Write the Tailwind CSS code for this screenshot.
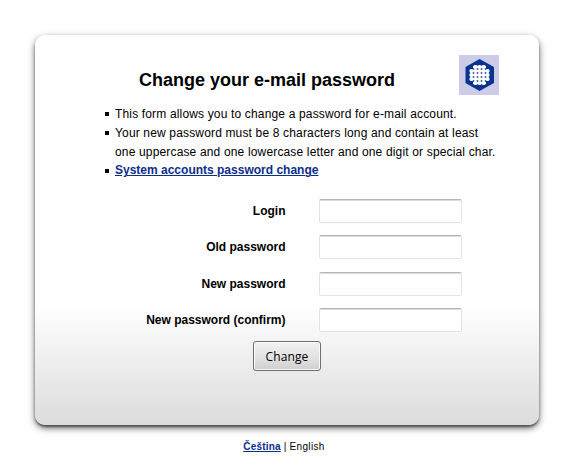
<!DOCTYPE html>
<html lang="en">
<head>
<meta charset="utf-8">
<title>Change your e-mail password</title>
<script src="https://cdn.jsdelivr.net/npm/@tailwindcss/browser@4"></script>
</head>
<body class="h-[476px] overflow-hidden bg-white pt-[35px] font-['Liberation_Sans',Arial,sans-serif] text-xs text-black">
<main class="ml-[35px] h-[390px] w-[504px] rounded-[10px] bg-linear-to-b from-[#fefefe] from-70% to-[#dcdcdc] shadow-[0_3px_7px_#00000099,0_2px_2px_#00000066]">
  <header class="flex h-[70px] pt-5 pl-[104px]">
    <h1 class="w-[320px] pt-[12px] text-[18px] leading-[27px] font-bold whitespace-nowrap">Change your e-mail password</h1>
    <svg class="size-10" viewBox="0 0 40 40" aria-hidden="true">
      <rect width="40" height="40" fill="#cccce9"/>
      <path d="M20.500 4 35 12V28L20.500 36 6.500 28V12Z" fill="#08338f"/>
      <path d="M16.500 10V30M20.500 10V30M24.500 10V30M12.500 14V26M28.500 14V26M14 12H27M10.500 16H30.500M10.500 20H30.500M10.500 24H30.500M14 28H27" fill="none" stroke="#fff" stroke-width="2.500"/>
    </svg>
  </header>
  <ul class="h-[76px] pl-[80px] leading-[18.8px] tracking-[0.158px] whitespace-nowrap">
    <li class="relative before:absolute before:top-[7px] before:-left-[10px] before:size-1 before:bg-black">This form allows you to change a password for e-mail account.</li>
    <li class="relative before:absolute before:top-[7px] before:-left-[10px] before:size-1 before:bg-black">Your new password must be 8 characters long and contain at least<br>one uppercase and one lowercase letter and one digit or special char.</li>
    <li class="relative before:absolute before:top-[8px] before:-left-[10px] before:size-1 before:bg-black"><a href="#" class="font-bold tracking-normal text-[#0c2e8c] underline">System accounts password change</a></li>
  </ul>
  <form class="pt-[18px]">
    <div class="grid grid-cols-[250.500px_143px] gap-x-[33.500px] auto-rows-[36.400px] text-right font-bold leading-[24px]">
      <label for="login">Login</label>
      <input id="login" class="h-6 rounded-[2px] border border-[#dfe3ea] border-t-[#b4b5bb] bg-white shadow-[inset_0_1px_0_#dcdce0]">
      <label for="old">Old password</label>
      <input id="old" type="password" class="h-6 rounded-[2px] border border-[#dfe3ea] border-t-[#b4b5bb] bg-white shadow-[inset_0_1px_0_#dcdce0]">
      <label for="new">New password</label>
      <input id="new" type="password" class="h-6 rounded-[2px] border border-[#dfe3ea] border-t-[#b4b5bb] bg-white shadow-[inset_0_1px_0_#dcdce0]">
      <label for="confirm">New password (confirm)</label>
      <input id="confirm" type="password" class="h-6 rounded-[2px] border border-[#dfe3ea] border-t-[#b4b5bb] bg-white shadow-[inset_0_1px_0_#dcdce0]">
    </div>
    <button type="button" class="mt-[-4px] ml-[218px] block h-[30px] w-[68px] rounded-[3px] border border-[#707070] bg-linear-to-b from-[#f2f2f2] from-0% via-[#e4e4e4] via-50% to-[#cfcfcf] pt-[2px] font-['Open_Sans',sans-serif] text-[12px] tracking-[0.1px] shadow-[inset_0_0_0_1px_#fafafa]">Change</button>
  </form>
</main>
<footer class="mt-[15px] pr-[6px] text-center text-[10px] leading-[14px] tracking-[0.2px]"><a href="#" class="font-bold text-[#0c2e8c] underline">Čeština</a> | <span class="tracking-[0.35px]">English</span></footer>
</body>
</html>
